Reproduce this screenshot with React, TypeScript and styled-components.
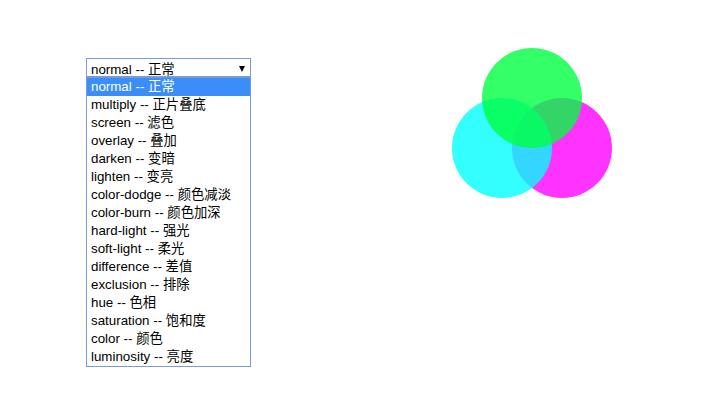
import React from "react";
import styled, { createGlobalStyle } from "styled-components";

const modes: [string, string][] = [
  ["normal", "正常"],
  ["multiply", "正片叠底"],
  ["screen", "滤色"],
  ["overlay", "叠加"],
  ["darken", "变暗"],
  ["lighten", "变亮"],
  ["color-dodge", "颜色减淡"],
  ["color-burn", "颜色加深"],
  ["hard-light", "强光"],
  ["soft-light", "柔光"],
  ["difference", "差值"],
  ["exclusion", "排除"],
  ["hue", "色相"],
  ["saturation", "饱和度"],
  ["color", "颜色"],
  ["luminosity", "亮度"],
];

const GlobalStyle = createGlobalStyle`
  html, body {
    margin: 0;
    padding: 0;
    background: #ffffff;
  }
  body {
    font-family: "Liberation Sans", Arial, "Noto Sans CJK SC", sans-serif;
  }
`;

const Page = styled.div`
  display: flex;
  align-items: flex-start;
  padding-top: 48px;
  height: 361px;
`;

const SelectWrap = styled.div`
  position: relative;
  margin-top: 10px;
  margin-left: 86px;
  width: 165px;
`;

const SelectBox = styled.div`
  box-sizing: border-box;
  height: 19px;
  border: 1px solid #7b9ad6;
  background: #ffffff;
  display: flex;
  align-items: flex-start;
  justify-content: space-between;
  padding: 3px 5px 0 4px;
  font-size: 13.333px;
  line-height: 15px;
  color: #000000;
`;

const Arrow = styled.span`
  align-self: center;
  width: 0;
  height: 0;
  border-left: 3.5px solid transparent;
  border-right: 3.5px solid transparent;
  border-top: 6px solid #000000;
  margin-top: 0;
`;

const ListBox = styled.ul`
  position: absolute;
  top: 19px;
  left: 0;
  box-sizing: border-box;
  width: 165px;
  margin: 0;
  padding: 0;
  list-style: none;
  border: 1px solid #7b9ad6;
  background: #ffffff;
`;

const Option = styled.li<{ $active?: boolean }>`
  height: 18px;
  line-height: 18px;
  padding-left: 4px;
  font-size: 13.333px;
  white-space: nowrap;
  color: ${(p) => (p.$active ? "#ffffff" : "#000000")};
  background: ${(p) => (p.$active ? "#3b8ef7" : "transparent")};
`;

const Stage = styled.div`
  position: relative;
  margin-left: 201px;
  width: 160px;
  height: 150px;
`;

const Circle = styled.div<{ $color: string; $x: number; $y: number }>`
  position: absolute;
  left: ${(p) => p.$x}px;
  top: ${(p) => p.$y}px;
  width: 100px;
  height: 100px;
  border-radius: 50%;
  background: ${(p) => p.$color};
  opacity: 0.8;
  mix-blend-mode: normal;
`;

export default function App() {
  return (
    <>
      <GlobalStyle />
      <Page>
        <SelectWrap>
          <SelectBox>
            <span>normal -- 正常</span>
            <Arrow />
          </SelectBox>
          <ListBox>
            {modes.map(([en, zh], i) => (
              <Option key={en} $active={i === 0}>
                {en} -- {zh}
              </Option>
            ))}
          </ListBox>
        </SelectWrap>
        <Stage>
          <Circle $color="rgb(255, 0, 255)" $x={60} $y={50} />
          <Circle $color="rgb(0, 255, 255)" $x={0} $y={50} />
          <Circle $color="rgb(0, 255, 64)" $x={30} $y={0} />
        </Stage>
      </Page>
    </>
  );
}
